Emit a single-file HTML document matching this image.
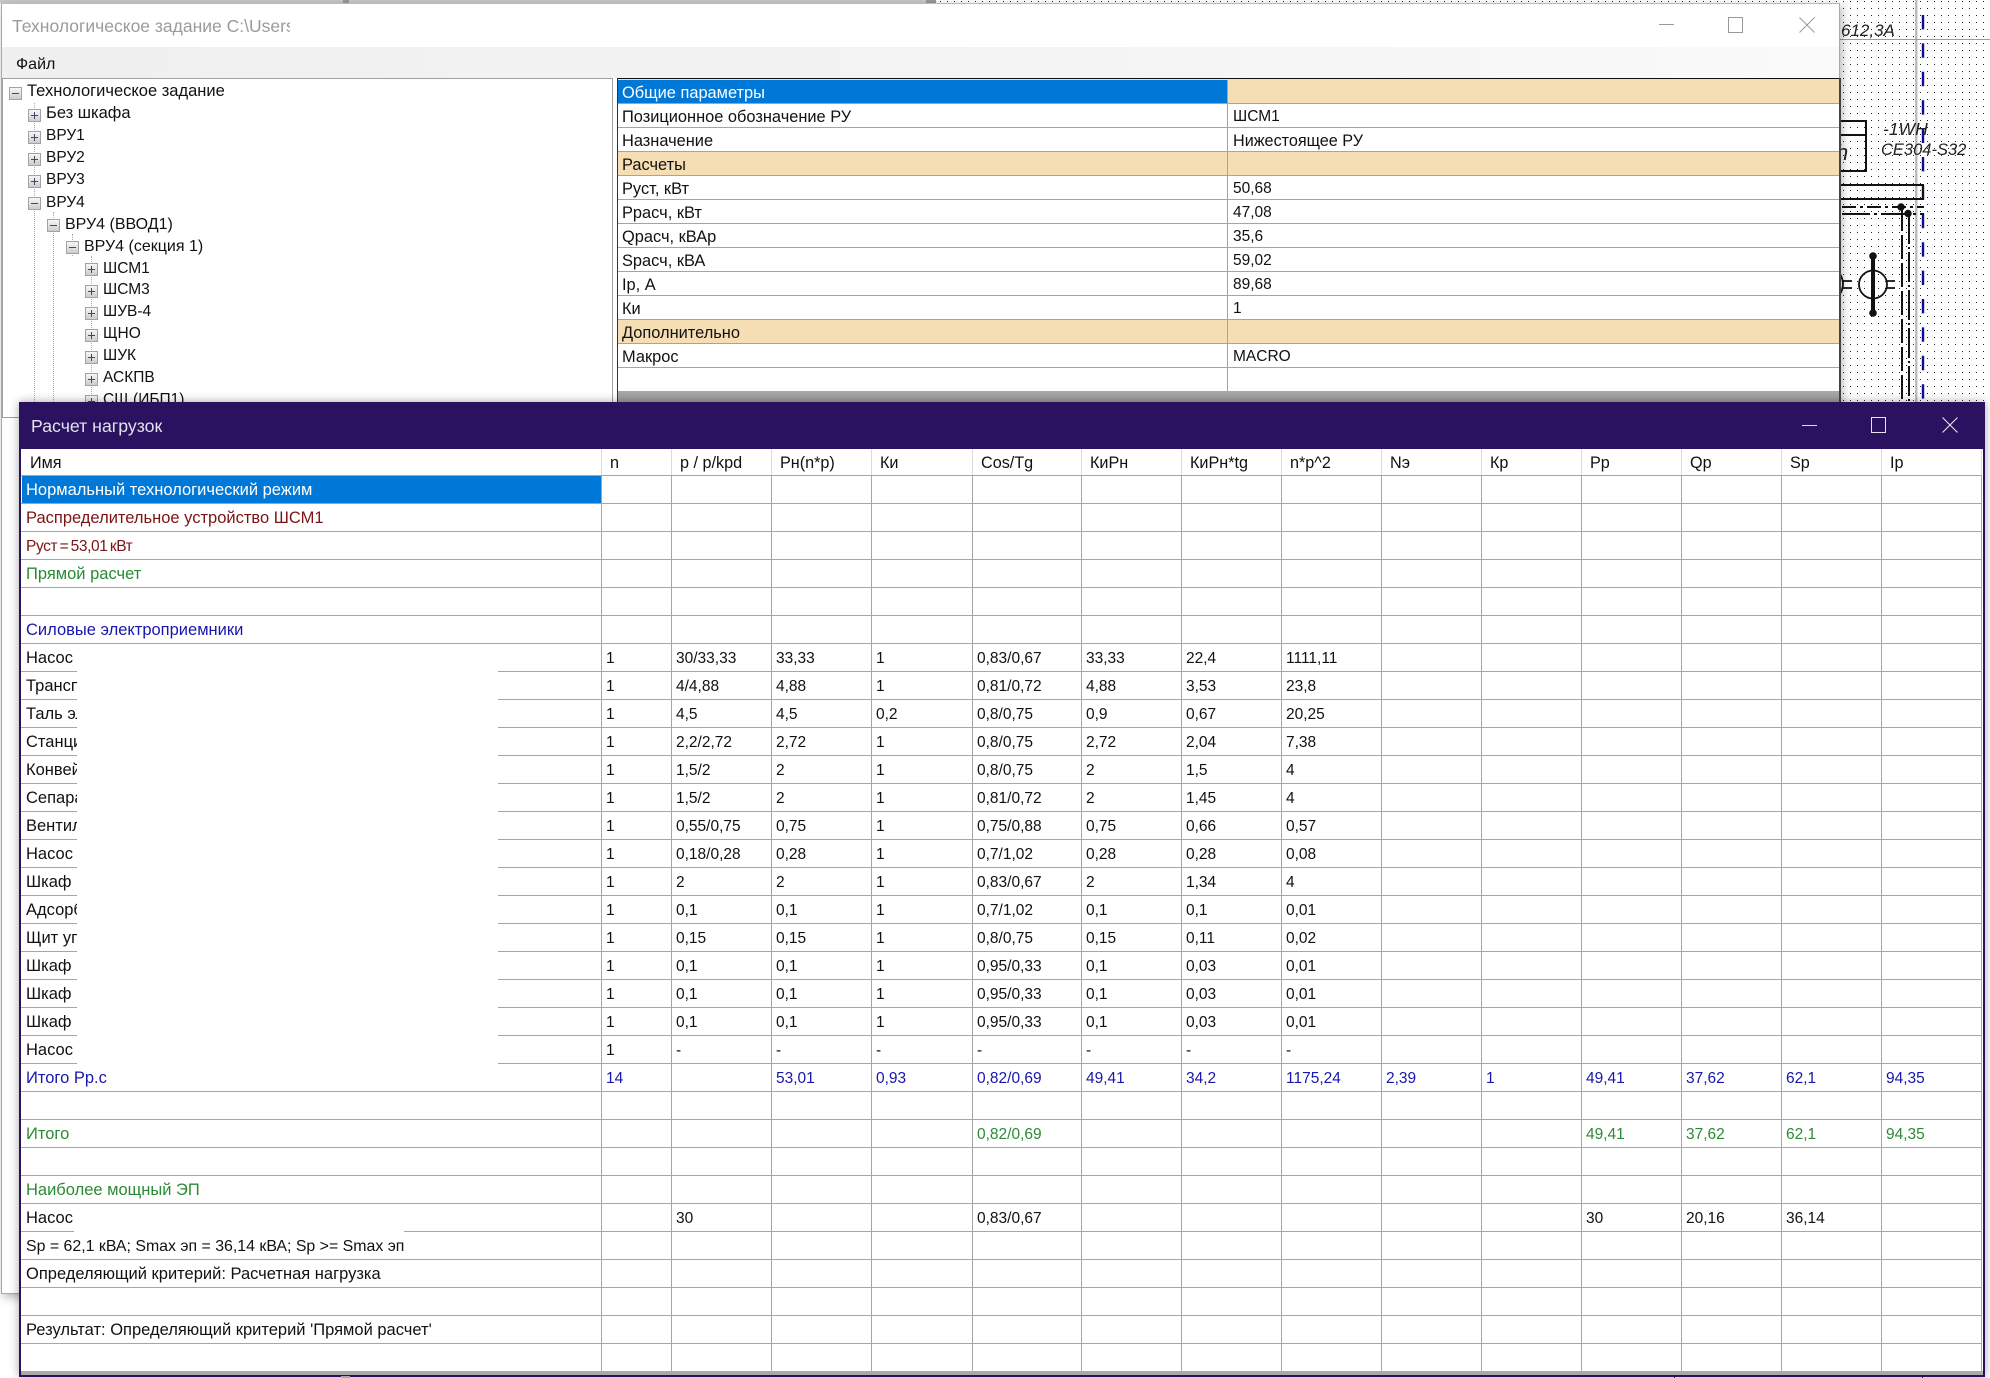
<!DOCTYPE html>
<html lang="ru"><head><meta charset="utf-8"><title>Расчет нагрузок</title>
<style>
html,body{margin:0;padding:0;background:#fff}
body{position:relative;width:1990px;height:1378px;overflow:hidden;font-family:"Liberation Sans",Arial,sans-serif;font-size:15px;color:#111}
.a{position:absolute}
.w1{left:1px;top:3px;width:1839px;height:1291px;background:#fff;border:1px solid #a8a8a8;border-top-color:#bbb;box-sizing:border-box;box-shadow:2px 3px 9px rgba(0,0,0,.3)}
.row1{left:27px;white-space:nowrap;height:22px;line-height:24px;font-size:15.5px}
.lg{font-size:16.5px;line-height:23px}
.b{position:absolute;width:13px;height:13px;box-sizing:border-box;border:1px solid #a2a2a2;background:linear-gradient(#f6f6f6,#cdcdcd)}
.b:before{content:"";position:absolute;left:2px;top:5px;width:7px;height:1px;background:#3d4a68}
.p:after{content:"";position:absolute;left:5px;top:2px;width:1px;height:7px;background:#3d4a68}
.dot{width:0;border-left:1px dotted #aaa}
.g1r{left:618px;width:1221px;height:24px;line-height:26px;border-bottom:1px solid #a4a4a4;box-sizing:border-box;font-size:15.5px;white-space:nowrap}
.g1r span{position:absolute;left:4px;font-size:16.4px}.g1r span+span{left:615px;font-size:15.5px}
.g1r span+span.v2{font-size:16.2px}
.tan{background:#f5deb3}
.w2{left:19px;top:402px;width:1966px;height:975px;background:#2a1260;box-shadow:0 0 9px rgba(0,0,0,.35)}
.grid{left:21px;top:449px;width:1962px;height:926px;background:#fff}
.v{top:449px;width:1px;height:922px;background:#a6a6a6}
.r{left:21px;height:28px;line-height:31px;display:grid;grid-template-columns:580px 70px 100px 100px 101px 109px 100px 100px 100px 100px 100px 100px 100px 100px 100px;white-space:nowrap;font-size:15.5px}
.r span{padding-left:5px;overflow:visible}
.r span:first-child{font-size:16.5px}
.blue{color:#1717ad}.green{color:#2c8a35}.red{color:#7b1414}
.hd{line-height:29px}
.hd span{padding-left:9px;font-size:16.2px}
.hd span:first-child{font-size:16.2px}
</style></head><body>

<svg class="a" style="left:0;top:0" width="1990" height="1378">
<defs><pattern id="d" x="926" y="1" width="7" height="7" patternUnits="userSpaceOnUse"><rect width="1" height="1" fill="#222"/></pattern></defs>
<rect x="926" y="0" width="1064" height="1378" fill="url(#d)"/>
</svg>
<div class="a" style="left:0;top:0;width:926px;height:3px;background:#c9c9c9"></div>
<div class="a" style="left:343px;top:0;width:6px;height:3px;background:#999"></div>
<div class="a" style="left:926px;top:0;width:10px;height:3px;background:#999"></div>

<svg class="a" style="left:1840px;top:0" width="150" height="402" viewBox="1840 0 150 402">
<rect x="1915" y="0" width="2.5" height="402" fill="#bcbcbc"/>
<rect x="1840" y="39" width="150" height="1" fill="#9c9c9c"/>
<path d="M1923 15V402" stroke="#0c0c98" stroke-width="2.4" stroke-dasharray="14.4 14" fill="none"/>
<path d="M1840 121H1866V171H1840M1840 135H1866" stroke="#111" stroke-width="2" fill="none"/>
<path d="M1840 185H1923V199H1840" stroke="#111" stroke-width="2" fill="none"/>
<path d="M1842 207H1924" stroke="#111" stroke-width="2" stroke-dasharray="14 4 3 4" fill="none"/>
<path d="M1842 214H1924" stroke="#111" stroke-width="2" stroke-dasharray="28 4 3 4" fill="none"/>
<circle cx="1901" cy="207" r="3.7" fill="#111"/><circle cx="1908" cy="213.500" r="3.7" fill="#111"/>
<path d="M1902 207V402" stroke="#111" stroke-width="2" stroke-dasharray="24 4" fill="none"/>
<path d="M1909 214V402" stroke="#111" stroke-width="2" stroke-dasharray="30 3 2 3" fill="none"/>
<path d="M1873 256V313" stroke="#111" stroke-width="4"/>
<circle cx="1873" cy="256" r="3.800" fill="#111"/><circle cx="1873" cy="313" r="3.800" fill="#111"/>
<circle cx="1873" cy="284.500" r="14" stroke="#111" stroke-width="1.800" fill="none"/>
<path d="M1887 281H1895M1887 288H1895M1843 281H1852M1843 288H1852" stroke="#111" stroke-width="1.800"/>
<path d="M1840 274Q1846 284 1840 294" stroke="#111" stroke-width="1.800" fill="none"/>
<g font-family="Liberation Sans,Arial,sans-serif" font-style="italic" fill="#222">
<text x="1841" y="36" font-size="17">612,3А</text>
<text x="1883" y="135" font-size="17.500">-1WH</text>
<text x="1881" y="155" font-size="16.500">CE304-S32</text>
<text x="1836" y="160" font-size="22">h</text>
</g>
</svg>

<div class="a w1"></div>
<div class="a" style="left:2px;top:4px;width:1837px;height:43px;background:#fff"></div>
<div class="a" style="left:12px;top:14px;width:278px;height:24px;line-height:24px;overflow:hidden;white-space:nowrap;color:#9b9b9b;font-size:17.5px">Технологическое задание C:\Users\Admin</div>
<svg class="a" style="left:1650px;top:10px" width="180" height="30">
<path d="M9 14.500H24" stroke="#999" stroke-width="1"/>
<rect x="78.500" y="7.500" width="14" height="15" stroke="#999" fill="none"/>
<path d="M149.500 7.500L164.500 22.500M164.500 7.500L149.500 22.500" stroke="#999" fill="none"/>
</svg>
<div class="a" style="left:2px;top:47px;width:1837px;height:31px;background:linear-gradient(90deg,#f0f0f0,#f3f3f3 50%,#fafafa)"></div>
<div class="a" style="left:16px;top:54px;line-height:22px;font-size:16px">Файл</div>

<div class="a" style="left:2px;top:78px;width:611px;height:340px;background:#fff;border:1px solid #a0a0a0;box-sizing:border-box"></div>
<div class="a dot" style="left:34px;top:103px;height:299px"></div>
<div class="a dot" style="left:53px;top:212px;height:190px"></div>
<div class="a dot" style="left:72px;top:234px;height:22px"></div>
<div class="a dot" style="left:91px;top:256px;height:146px"></div>

<div class="a b m" style="left:9px;top:87px"></div><div class="a row1 lg" style="top:80px">Технологическое задание</div>
<div class="a b p" style="left:28px;top:109px"></div><div class="a row1 lg" style="left:46px;top:102px">Без шкафа</div>
<div class="a b p" style="left:28px;top:131px"></div><div class="a row1" style="left:46px;top:124px">ВРУ1</div>
<div class="a b p" style="left:28px;top:153px"></div><div class="a row1" style="left:46px;top:146px">ВРУ2</div>
<div class="a b p" style="left:28px;top:175px"></div><div class="a row1" style="left:46px;top:168px">ВРУ3</div>
<div class="a b m" style="left:28px;top:197px"></div><div class="a row1" style="left:46px;top:191px">ВРУ4</div>
<div class="a b m" style="left:47px;top:219px"></div><div class="a row1" style="left:65px;top:213px;font-size:16px">ВРУ4 (ВВОД1)</div>
<div class="a b m" style="left:66px;top:241px"></div><div class="a row1" style="left:84px;top:235px;font-size:16px">ВРУ4 (секция 1)</div>
<div class="a b p" style="left:85px;top:263px"></div><div class="a row1" style="left:103px;top:257px">ШСМ1</div>
<div class="a b p" style="left:85px;top:285px"></div><div class="a row1" style="left:103px;top:278px">ШСМ3</div>
<div class="a b p" style="left:85px;top:307px"></div><div class="a row1" style="left:103px;top:300px">ШУВ-4</div>
<div class="a b p" style="left:85px;top:329px"></div><div class="a row1" style="left:103px;top:322px">ЩНО</div>
<div class="a b p" style="left:85px;top:351px"></div><div class="a row1" style="left:103px;top:344px">ШУК</div>
<div class="a b p" style="left:85px;top:373px"></div><div class="a row1" style="left:103px;top:366px">АСКПВ</div>
<div class="a b p" style="left:85px;top:395px"></div><div class="a row1" style="left:103px;top:388px">СЩ (ИБП1)</div>

<div class="a" style="left:617px;top:78px;width:1224px;height:1px;background:#111"></div>
<div class="a" style="left:617px;top:78px;width:1px;height:330px;background:#333"></div>
<div class="a" style="left:1839px;top:78px;width:2px;height:330px;background:#444"></div>
<div class="a" style="left:618px;top:79px;width:1221px;height:312px;background:#fff"></div>
<div class="a" style="left:618px;top:391px;width:1221px;height:12px;background:linear-gradient(#aaa,#999)"></div>
<div class="a g1r tan" style="top:79px;height:25px"><span>&nbsp;</span></div>
<div class="a" style="left:618px;top:80px;width:609px;height:23px;line-height:26px;background:#0078d7;color:#fff;font-size:16.4px;padding-left:4px;box-sizing:border-box">Общие параметры</div>
<div class="a g1r" style="top:104px"><span>Позиционное обозначение РУ</span><span>ШСМ1</span></div>
<div class="a g1r" style="top:128px"><span>Назначение</span><span class="v2">Нижестоящее РУ</span></div>
<div class="a g1r tan" style="top:152px"><span>Расчеты</span></div>
<div class="a g1r" style="top:176px"><span>Руст, кВт</span><span>50,68</span></div>
<div class="a g1r" style="top:200px"><span>Ррасч, кВт</span><span>47,08</span></div>
<div class="a g1r" style="top:224px"><span>Qрасч, кВАр</span><span>35,6</span></div>
<div class="a g1r" style="top:248px"><span>Sрасч, кВА</span><span>59,02</span></div>
<div class="a g1r" style="top:272px"><span>Ip, А</span><span>89,68</span></div>
<div class="a g1r" style="top:296px"><span>Ки</span><span>1</span></div>
<div class="a g1r tan" style="top:320px"><span>Дополнительно</span></div>
<div class="a g1r" style="top:344px"><span>Макрос</span><span>MACRO</span></div>
<div class="a" style="left:1227px;top:80px;width:1px;height:311px;background:#a4a4a4"></div>

<div class="a w2"></div>
<div class="a" style="left:31px;top:414px;line-height:24px;color:#e4e0ee;font-size:17.7px">Расчет нагрузок</div>
<svg class="a" style="left:1790px;top:410px" width="190" height="30">
<path d="M12 15.500H27" stroke="#ddd"/>
<rect x="81.500" y="7.500" width="14" height="15" stroke="#e6e6e6" fill="none"/>
<path d="M152.500 7.500L167.500 22.500M167.500 7.500L152.500 22.500" stroke="#eee" fill="none"/>
</svg>
<div class="a grid"></div>
<div class="a" style="left:21px;top:1371px;width:1962px;height:4px;background:#aaa"></div>

<div class="a v" style="left:601px"></div><div class="a v" style="left:671px"></div><div class="a v" style="left:771px"></div><div class="a v" style="left:871px"></div><div class="a v" style="left:972px"></div><div class="a v" style="left:1081px"></div><div class="a v" style="left:1181px"></div><div class="a v" style="left:1281px"></div><div class="a v" style="left:1381px"></div><div class="a v" style="left:1481px"></div><div class="a v" style="left:1581px"></div><div class="a v" style="left:1681px"></div><div class="a v" style="left:1781px"></div><div class="a v" style="left:1881px"></div><div class="a v" style="left:1981px"></div>

<div class="a" style="left:21px;top:449px;width:1961px;height:26px;background:rgba(255,255,255,.6)"></div>
<div class="a" style="left:21px;top:475px;width:1961px;height:896px;background:repeating-linear-gradient(#a6a6a6 0,#a6a6a6 1px,transparent 1px,transparent 28px)"></div>

<div class="a" style="left:22px;top:476px;width:579px;height:27px;background:#0078d7"></div>

<div class="a r hd" style="top:449px"><span>Имя</span><span>n</span><span>p / p/kpd</span><span>Рн(n*p)</span><span>Ки</span><span>Cos/Tg</span><span>КиРн</span><span>КиРн*tg</span><span>n*p^2</span><span>Nэ</span><span>Кр</span><span>Рр</span><span>Qp</span><span>Sp</span><span>Ip</span></div>
<div class="a r" style="top:475px;color:#fff"><span>Нормальный технологический режим</span></div>
<div class="a r red" style="top:503px"><span>Распределительное устройство ШСМ1</span></div>
<div class="a r red" style="top:531px"><span style="font-size:15.5px;word-spacing:-1.5px;letter-spacing:-.4px">Руст = 53,01 кВт</span></div>
<div class="a r green" style="top:559px"><span>Прямой расчет</span></div>
<div class="a r blue" style="top:615px"><span>Силовые электроприемники</span></div>
<div class="a r" style="top:643px"><span>Насос р</span><span>1</span><span>30/33,33</span><span>33,33</span><span>1</span><span>0,83/0,67</span><span>33,33</span><span>22,4</span><span>1111,11</span></div>
<div class="a r" style="top:671px"><span>Транспортер</span><span>1</span><span>4/4,88</span><span>4,88</span><span>1</span><span>0,81/0,72</span><span>4,88</span><span>3,53</span><span>23,8</span></div>
<div class="a r" style="top:699px"><span>Таль электрическая</span><span>1</span><span>4,5</span><span>4,5</span><span>0,2</span><span>0,8/0,75</span><span>0,9</span><span>0,67</span><span>20,25</span></div>
<div class="a r" style="top:727px"><span>Станция</span><span>1</span><span>2,2/2,72</span><span>2,72</span><span>1</span><span>0,8/0,75</span><span>2,72</span><span>2,04</span><span>7,38</span></div>
<div class="a r" style="top:755px"><span>Конвейер</span><span>1</span><span>1,5/2</span><span>2</span><span>1</span><span>0,8/0,75</span><span>2</span><span>1,5</span><span>4</span></div>
<div class="a r" style="top:783px"><span>Сепаратор</span><span>1</span><span>1,5/2</span><span>2</span><span>1</span><span>0,81/0,72</span><span>2</span><span>1,45</span><span>4</span></div>
<div class="a r" style="top:811px"><span>Вентилятор</span><span>1</span><span>0,55/0,75</span><span>0,75</span><span>1</span><span>0,75/0,88</span><span>0,75</span><span>0,66</span><span>0,57</span></div>
<div class="a r" style="top:839px"><span>Насос</span><span>1</span><span>0,18/0,28</span><span>0,28</span><span>1</span><span>0,7/1,02</span><span>0,28</span><span>0,28</span><span>0,08</span></div>
<div class="a r" style="top:867px"><span>Шкаф</span><span>1</span><span>2</span><span>2</span><span>1</span><span>0,83/0,67</span><span>2</span><span>1,34</span><span>4</span></div>
<div class="a r" style="top:895px"><span>Адсорбер</span><span>1</span><span>0,1</span><span>0,1</span><span>1</span><span>0,7/1,02</span><span>0,1</span><span>0,1</span><span>0,01</span></div>
<div class="a r" style="top:923px"><span>Щит управления</span><span>1</span><span>0,15</span><span>0,15</span><span>1</span><span>0,8/0,75</span><span>0,15</span><span>0,11</span><span>0,02</span></div>
<div class="a r" style="top:951px"><span>Шкаф</span><span>1</span><span>0,1</span><span>0,1</span><span>1</span><span>0,95/0,33</span><span>0,1</span><span>0,03</span><span>0,01</span></div>
<div class="a r" style="top:979px"><span>Шкаф</span><span>1</span><span>0,1</span><span>0,1</span><span>1</span><span>0,95/0,33</span><span>0,1</span><span>0,03</span><span>0,01</span></div>
<div class="a r" style="top:1007px"><span>Шкаф</span><span>1</span><span>0,1</span><span>0,1</span><span>1</span><span>0,95/0,33</span><span>0,1</span><span>0,03</span><span>0,01</span></div>
<div class="a r" style="top:1035px"><span>Насос</span><span>1</span><span>-</span><span>-</span><span>-</span><span>-</span><span>-</span><span>-</span><span>-</span></div>
<div class="a r blue" style="top:1063px"><span>Итого Рр.с</span><span>14</span><span></span><span>53,01</span><span>0,93</span><span>0,82/0,69</span><span>49,41</span><span>34,2</span><span>1175,24</span><span>2,39</span><span>1</span><span>49,41</span><span>37,62</span><span>62,1</span><span>94,35</span></div>
<div class="a r green" style="top:1119px"><span>Итого</span><span></span><span></span><span></span><span></span><span>0,82/0,69</span><span></span><span></span><span></span><span></span><span></span><span>49,41</span><span>37,62</span><span>62,1</span><span>94,35</span></div>
<div class="a r green" style="top:1175px"><span>Наиболее мощный ЭП</span></div>
<div class="a r" style="top:1203px"><span>Насос</span><span></span><span>30</span><span></span><span></span><span>0,83/0,67</span><span></span><span></span><span></span><span></span><span></span><span>30</span><span>20,16</span><span>36,14</span></div>
<div class="a" style="left:26px;top:1231px;width:378px;height:28px;line-height:31px;overflow:hidden;white-space:nowrap;font-size:15.9px">Sp = 62,1 кВА; Smax эп = 36,14 кВА; Sp &gt;= Smax эп</div>
<div class="a r" style="top:1259px"><span>Определяющий критерий: Расчетная нагрузка</span></div>
<div class="a r" style="top:1315px"><span>Результат: Определяющий критерий 'Прямой расчет'</span></div>

<div class="a" style="left:77px;top:644px;width:421px;height:420px;background:#fff"></div>
<div class="a" style="left:74px;top:1204px;width:330px;height:28px;background:#fff"></div>

<div class="a" style="left:341px;top:1376px;width:9px;height:2px;background:#aaa"></div>
<div class="a" style="left:1674px;top:1376px;width:1px;height:2px;background:#222"></div>
<div class="a" style="left:1922px;top:1376px;width:1px;height:2px;background:#222"></div>
</body></html>
